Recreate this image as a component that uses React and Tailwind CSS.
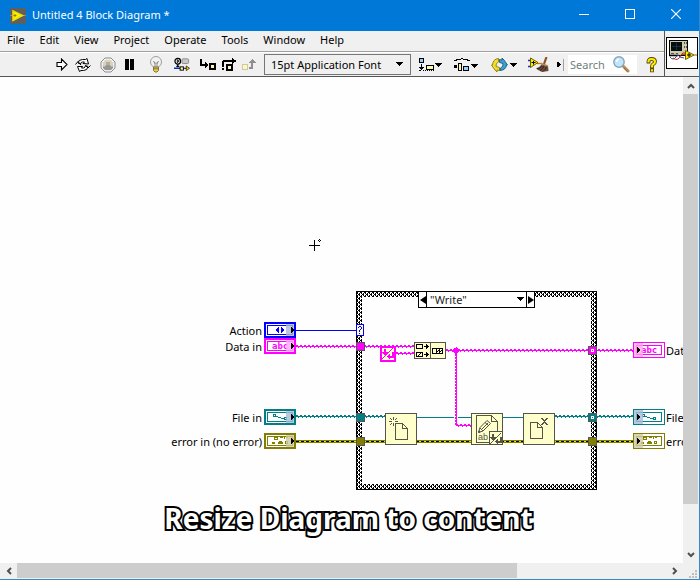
import React from "react";

const MENUS = ["File", "Edit", "View", "Project", "Operate", "Tools", "Window", "Help"];

const PINK = "#ff00ff";
const TEAL = "#007f86";
const OLIVE = "#827f00";
const CREAM = "#ffffcc";
const EDGE = "#545448";

/* ---------- title bar ---------- */

function AppIcon() {
  return (
    <svg width="16" height="16" viewBox="0 0 16 16" aria-hidden="true">
      <rect width="16" height="16" fill="#5f5f5f" />
      <path d="M0 7.500h3M13 7.500h3" stroke="#8a8a8a" />
      <path d="M3 3L12.500 7.500L3 12.500Z" fill="#fff200" stroke="#f0e000" strokeWidth="1.500" />
      <path d="M3.500 7.500h3M5 6v3" stroke="#8a7b00" />
    </svg>
  );
}

function TitleBar() {
  return (
    <header className="flex h-[31px] shrink-0 items-center bg-[#0078d7] pl-[10px] text-white">
      <AppIcon />
      <h1 className="ml-[6px] flex-1 pb-px text-[11px] leading-4">Untitled 4 Block Diagram *</h1>
      <button aria-label="Minimize" className="flex h-full w-[46px] items-center justify-center pb-1">
        <svg width="10" height="10" viewBox="0 0 10 10" shapeRendering="crispEdges">
          <path d="M0 5.500H10" stroke="#fff" />
        </svg>
      </button>
      <button aria-label="Maximize" className="flex h-full w-[45px] items-center justify-center pb-[3px]">
        <svg width="10" height="10" viewBox="0 0 10 10" shapeRendering="crispEdges">
          <rect x="0.500" y="0.500" width="9" height="9" fill="none" stroke="#fff" />
        </svg>
      </button>
      <button aria-label="Close" className="flex h-full w-[47px] items-center justify-center pb-[3px]">
        <svg width="10" height="10" viewBox="0 0 10 10">
          <path d="M0 0L10 10M10 0L0 10" stroke="#fff" strokeWidth="1.100" />
        </svg>
      </button>
    </header>
  );
}

/* ---------- tool bar icons ---------- */

function Caret({ x, y }) {
  return <path d={`M${x} ${y}h7v1h-1v1h-1v1h-1v1h-1v-1h-1v-1h-1v-1h-1z`} fill="#000" />;
}

function RunIcon() {
  return (
    <svg width="12" height="13" viewBox="0 0 12 13">
      <path d="M1 4.500H5.500V1L11 6.500L5.500 12V8.500H1Z" fill="#fff" stroke="#000" strokeWidth="1.100" />
    </svg>
  );
}

function LoopIcon() {
  return (
    <svg width="16" height="14" viewBox="0 0 16 14">
      <path
        d="M3 5Q3.500 1.500 7.500 1.500H10.500L12 0.500L13.500 6L8 5.500L9.500 4H7.500Q6 4 5.500 6Z"
        fill="#fff"
        stroke="#000"
      />
      <path
        d="M13 8.500Q12.500 12.500 8.500 12.500H6L4.500 13.500L2.500 8.500L7.500 8.500L6.500 10H8.500Q10.500 9.500 10.500 7.500Z"
        fill="#fff"
        stroke="#000"
      />
      <path d="M0.500 6.500L3 3.500L6 7M10.500 7.500L13 10L15.500 7.500" fill="none" stroke="#000" />
    </svg>
  );
}

function AbortIcon() {
  return (
    <svg width="16" height="16" viewBox="0 0 16 16">
      <path d="M5 1H11L15 5V11L11 15H5L1 11V5Z" fill="#f4f4f4" stroke="#8c8c8c" />
      <path d="M5.500 2.800H10.500L13.200 5.500V10.500L10.500 13.200H5.500L2.800 10.500V5.500Z" fill="#d9d3bd" />
      <path d="M3 9.500H5L6 8H10L11 9.500H13V11L11 13H5L3 11Z" fill="#969696" />
      <path d="M6 5H10V8H6Z" fill="#b9ae99" />
    </svg>
  );
}

function PauseIcon() {
  return (
    <svg width="10" height="11" viewBox="0 0 10 11" shapeRendering="crispEdges">
      <rect width="4" height="11" />
      <rect x="5" width="4" height="11" />
    </svg>
  );
}

function BulbIcon() {
  return (
    <svg width="12" height="17" viewBox="0 0 12 17">
      <circle cx="6" cy="6" r="5.500" fill="#f2f2f2" stroke="#9d9d9d" />
      <path d="M3.500 5L5 8V12M8.500 5L7 8V12M4 6L6 7.500L8 6" fill="none" stroke="#8c8c8c" />
      <path d="M3.500 11H8.500V14.500L7 16H5L3.500 14.500Z" fill="#e8cf45" stroke="#7d7340" />
      <path d="M3.500 12.800H8.500" stroke="#7d7340" />
    </svg>
  );
}

function RetainIcon() {
  return (
    <svg width="17" height="15" viewBox="0 0 17 15">
      <circle cx="4" cy="4" r="3" fill="#fff" stroke="#000" strokeWidth="1.300" />
      <path d="M3.500 2.500V5.500L5.500 4L3.500 2.500" fill="none" stroke="#000" />
      <rect x="8.500" y="1.500" width="7" height="5" rx="1" fill="#c8c8c8" stroke="#8a8a8a" />
      <path d="M4 7V10.500M2.500 9.500H5.500" stroke="#000" strokeWidth="1.300" />
      <path d="M0 11.500H8M13 11.500H15" stroke="#0034c8" strokeWidth="1.500" />
      <rect x="6.500" y="10" width="3.500" height="3.500" fill="#fff6b0" stroke="#000" />
      <path d="M10 11.500H13" stroke="#000" />
      <path d="M13 9V14L16.500 11.500Z" fill="#f3d600" stroke="#000" strokeWidth="0.700" />
    </svg>
  );
}

function StepIntoIcon() {
  return (
    <svg width="16" height="13" viewBox="0 0 16 13" shapeRendering="crispEdges">
      <path d="M0 1H2V6H5V4H6V5H7V6H8V8H7V9H6V10H5V8H0Z" />
      <rect x="10" y="6" width="5" height="5" fill="#fff6b0" stroke="#000" strokeWidth="2" />
    </svg>
  );
}

function StepOverIcon() {
  return (
    <svg width="16" height="13" viewBox="0 0 16 13" shapeRendering="crispEdges">
      <path d="M0 12V10H2V12ZM0 9V3H1V2H10V0H11V1H12V2H14V4H12V5H11V6H10V4H2V9Z" />
      <rect x="5" y="7" width="5" height="5" fill="#fff6b0" stroke="#000" strokeWidth="2" />
    </svg>
  );
}

function StepOutIcon() {
  return (
    <svg width="15" height="12" viewBox="0 0 15 12" shapeRendering="crispEdges">
      <rect x="0.500" y="5.500" width="5" height="5" fill="#fff6c4" stroke="#c9c4a0" />
      <path d="M7 8H10V4H8V3H9V2H10V1H11V0H12V1H13V2H14V3H15V4H12V10H7Z" fill="#8f8f8f" />
    </svg>
  );
}

function AlignIcon() {
  return (
    <svg width="23" height="14" viewBox="0 0 23 14" shapeRendering="crispEdges">
      <rect x="0.500" y="0.500" width="4" height="4" fill="#8fd0ff" stroke="#000" />
      <path d="M2 6H3V9H5V10H4V11H3V12H2V11H1V10H0V9H2Z" />
      <rect x="7.500" y="7.500" width="7" height="4" fill="#fff6b0" stroke="#000" />
      <path d="M0 12.500h2M4 12.500h1M6 12.500h1M8 12.500h1M10 12.500h1M12 12.500h1M14 12.500h1" stroke="#000" />
      <Caret x={16} y={5} />
    </svg>
  );
}

function DistributeIcon() {
  return (
    <svg width="24" height="14" viewBox="0 0 24 14" shapeRendering="crispEdges">
      <path d="M0 3V2H2V1H7V0H9V1H14V2H16V3H13V2H9V1H7V2H3V3Z" />
      <path d="M0 7H3V10H0Z" />
      <rect x="4.500" y="5.500" width="3" height="7" fill="#fff6b0" stroke="#000" />
      <rect x="9.500" y="8.500" width="5" height="4" fill="#8fd0ff" stroke="#000" />
      <Caret x={17} y={6} />
    </svg>
  );
}

function ReorderIcon() {
  return (
    <svg width="26" height="16" viewBox="0 0 26 16">
      <path
        d="M7.500 1.500Q2 2 1.500 8H0.500L4 13L6 15V13L8.500 13.500V10.500L5 9.500Q4.500 6 7.500 5Z"
        fill="#f5df2e"
        stroke="#8b7a00"
        strokeWidth="0.900"
      />
      <path
        d="M9 13.500Q15 13 15.500 8H16.500L13 3L11 1V3L8.500 2.500V5.500L12 6.500Q12.500 10 9.500 11Z"
        fill="#3c9fd4"
        stroke="#1a587c"
        strokeWidth="0.900"
      />
      <g shapeRendering="crispEdges">
        <Caret x={19} y={6} />
      </g>
    </svg>
  );
}

function CleanUpIcon() {
  return (
    <svg width="22" height="16" viewBox="0 0 22 16">
      <path d="M0 3.500H3M0 9.500H3" stroke="#1b2fd0" strokeWidth="1.300" />
      <path d="M9 6.500H14" stroke="#e06a00" strokeWidth="1.300" />
      <path d="M18.500 0L16 7" stroke="#8a5425" strokeWidth="2.200" />
      <path d="M14 7L20 9L20.500 14L14 15L10 13L8 11.500Q12 10 14 7Z" fill="#6e4b3a" />
      <path d="M9 11.500Q12 12 14 9M12 13.500Q15 12 16 9M15 14.500Q18 12 18.500 10" fill="none" stroke="#2f2320" />
      <path d="M13 6.500L20 9" stroke="#b58b60" strokeWidth="1.500" />
      <path d="M2.500 1L10 5.500L2.500 10.500Z" fill="#ffee00" stroke="#6b6000" />
      <path d="M3.500 5.500h4M5.500 4v3.500" stroke="#000" />
    </svg>
  );
}

function MagnifierIcon() {
  return (
    <svg width="17" height="17" viewBox="0 0 17 17" aria-hidden="true">
      <path d="M9.500 9.500L15 15" stroke="#c08a4c" strokeWidth="3" strokeLinecap="round" />
      <path d="M11 12L14.500 15.800" stroke="#7b6a5d" strokeWidth="1" />
      <circle cx="6" cy="6" r="5.200" fill="#bfe6fb" stroke="#86a5ba" strokeWidth="1.400" />
      <path d="M3.500 6Q3.500 3.500 6 3.300" fill="none" stroke="#fff" strokeWidth="1.400" />
    </svg>
  );
}

function HelpIcon() {
  return (
    <svg width="12" height="16" viewBox="0 0 12 16">
      <g fill="none" strokeLinecap="square">
        <path d="M2.500 4.500Q2.500 2 5.500 2Q9 2 9 4.700Q9 6.300 6.800 7.500Q6 8 6 9.500M6 13.300V13.400" stroke="#4d4600" strokeWidth="3.800" />
        <path d="M2.500 4.500Q2.500 2 5.500 2Q9 2 9 4.700Q9 6.300 6.800 7.500Q6 8 6 9.500M6 13.300V13.400" stroke="#ffea00" strokeWidth="2.100" />
      </g>
    </svg>
  );
}

function ViIcon() {
  return (
    <svg width="32" height="32" viewBox="0 0 32 32">
      <rect x="0.500" y="0.500" width="31" height="31" fill="#fff" stroke="#000" />
      <rect x="3.500" y="3.500" width="18" height="15" fill="#cfc9a4" stroke="#000" />
      <rect x="5" y="5" width="11" height="9" fill="#060d12" />
      <path d="M6 9.500H15M10.500 6V13" stroke="#24413f" strokeWidth="0.700" />
      <path d="M18.500 5V7M18.500 9V11M20.500 5V7M20.500 9V11M5 16.500H8M10 16.500H12" stroke="#555" />
      <path d="M3 18.500H12" stroke="#000" strokeWidth="1.500" />
      <path d="M4 20Q7 24 10 20Q12 16 14 20L18 21" fill="none" stroke="#24479a" />
      <path d="M7 21Q12 25 15 18Q17 15 19 16" fill="none" stroke="#c02222" />
      <path d="M15 17.500H19" stroke="#d04a00" />
      <path d="M19.500 13.500L28 18L19.500 22.500Z" fill="#ffea00" stroke="#6b6000" />
      <path d="M28 18H31" stroke="#d04a00" />
      <path d="M21 18h4M23 16v4" stroke="#000" />
    </svg>
  );
}

function Tool({ label, className, children }) {
  return (
    <button aria-label={label} className={`flex shrink-0 items-center ${className}`}>
      {children}
    </button>
  );
}

function ToolBar() {
  return (
    <div role="toolbar" className="flex h-6 items-center border-t border-white pl-14">
      <Tool label="Run" className="w-3"><RunIcon /></Tool>
      <Tool label="Run continuously" className="ml-[7px] w-4"><LoopIcon /></Tool>
      <Tool label="Abort execution" className="ml-[9px] w-4"><AbortIcon /></Tool>
      <Tool label="Pause" className="ml-[9px] w-[10px]"><PauseIcon /></Tool>
      <Tool label="Highlight execution" className="ml-[15px] w-3"><BulbIcon /></Tool>
      <Tool label="Retain wire values" className="ml-3 w-4"><RetainIcon /></Tool>
      <Tool label="Step into" className="ml-[10px] w-4"><StepIntoIcon /></Tool>
      <Tool label="Step over" className="ml-[6px] w-4"><StepOverIcon /></Tool>
      <Tool label="Step out" className="ml-1 w-[14px]"><StepOutIcon /></Tool>
      <div className="relative ml-2 w-[147px] shrink-0">
        <select
          aria-label="Text settings"
          className="block h-[21px] w-full appearance-none border border-[#767676] bg-[#f0f0f0] pl-[6px] text-[11px] leading-4 text-black"
        >
          <option>15pt Application Font</option>
        </select>
        <svg
          className="pointer-events-none absolute top-2 right-2"
          width="7"
          height="4"
          viewBox="0 0 7 4"
          shapeRendering="crispEdges"
        >
          <Caret x={0} y={0} />
        </svg>
      </div>
      <Tool label="Align objects" className="ml-2 w-[23px]"><AlignIcon /></Tool>
      <Tool label="Distribute objects" className="ml-3 w-6"><DistributeIcon /></Tool>
      <Tool label="Reorder" className="ml-[13px] w-[26px]"><ReorderIcon /></Tool>
      <Tool label="Clean up diagram" className="ml-[11px] w-[22px]"><CleanUpIcon /></Tool>
      <Tool label="More" className="ml-[7px] w-1">
        <svg width="4" height="5" viewBox="0 0 4 5" shapeRendering="crispEdges">
          <path d="M0 0H2V1H3V2H4V3H3V4H2V5H0Z" />
        </svg>
      </Tool>
      <div className="ml-[2px] h-3 w-px bg-[#a0a0a0]" />
      <div className="ml-1 flex h-[19px] w-[69px] shrink-0 items-center bg-white pl-[2px]">
        <input
          aria-label="Search"
          placeholder="Search"
          className="w-[43px] bg-transparent text-[11px] leading-4 outline-none placeholder:text-[#6f7f7a]"
        />
        <MagnifierIcon />
      </div>
      <Tool label="Show context help" className="ml-[9px] w-3"><HelpIcon /></Tool>
    </div>
  );
}

/* ---------- diagram ---------- */

/* Braided wire: a solid core with alternating ticks above and below it. */
function Braid({ x1, x2, y, color }) {
  return (
    <g stroke={color}>
      <path d={`M${x1} ${y - 0.5}H${x2}`} strokeDasharray="2 2" />
      <path d={`M${x1} ${y + 0.5}H${x2}`} />
      <path d={`M${x1} ${y + 1.5}H${x2}`} strokeDasharray="1 3" strokeDashoffset="-2" />
    </g>
  );
}

function ErrorWire({ x1, x2, y }) {
  return (
    <g>
      <path d={`M${x1} ${y + 0.5}H${x2}`} stroke={OLIVE} strokeWidth="3" />
      <path d={`M${x1} ${y + 0.5}H${x2}`} stroke="#f0e800" />
      <path d={`M${x1} ${y + 0.5}H${x2}`} stroke="#000" strokeDasharray="3 2" />
    </g>
  );
}

function Tunnel({ x, y, color, hollow }) {
  return (
    <g>
      <rect x={x + 0.5} y={y + 0.5} width="8" height="8" fill={color} stroke="#555" />
      {hollow && <rect x={x + 3.5} y={y + 3.5} width="2" height="2" fill={color} stroke="#fff" />}
    </g>
  );
}

function Glyph({ kind, color }) {
  if (kind === "enum")
    return <path d="M15 5V11H14V10H13V9H12V7H13V6H14V5ZM17 5V11H18V10H19V9H20V7H19V6H18V5Z" fill={color} />;
  if (kind === "string")
    return (
      <text x="8" y="11" fill={color} fontSize="9" fontWeight="700" fontFamily="'DejaVu Sans Mono', monospace">
        abc
      </text>
    );
  if (kind === "refnum")
    return (
      <g fill="none" stroke={color}>
        <rect x="9.500" y="5.500" width="2" height="2" />
        <path d="M12 7.500H14M14 8.500H17M17 9.500H20" />
        <rect x="20.500" y="8.500" width="2" height="2" />
      </g>
    );
  return (
    <g fill="none" stroke={color}>
      <rect x="10.500" y="4.500" width="3" height="2" />
      <path d="M16 4.500H19M20.500 4V6M22 4.500H24M8 9.500H11M8 10.500H11M14 9.500H19M14 10.500H19M15 8.500H18" />
      <rect x="21.500" y="8.500" width="2" height="2" />
    </g>
  );
}

function Terminal({ x, y, color, tint, kind, output }) {
  return (
    <g transform={`translate(${x} ${y})`}>
      {output ? (
        <>
          <rect x="0.500" y="0.500" width="31" height="15" fill="#fff" stroke={color} />
          <rect x="3.500" y="3.500" width="25" height="9" fill="#fff" stroke={color} />
          <Glyph kind={kind} color={color} />
          <rect x="1" y="1" width="9" height="14" fill={tint} opacity="0.800" />
          <path d="M4 5H5V6H6V7H7V9H6V10H5V11H4Z" />
        </>
      ) : (
        <>
          <rect x="1" y="1" width="30" height="14" fill="#fff" stroke={color} strokeWidth="2" />
          <rect x="3.500" y="3.500" width="25" height="9" fill="#fff" stroke={color} />
          <Glyph kind={kind} color={color} />
          <rect x="22" y="2" width="8" height="12" fill={tint} opacity="0.800" />
          <path d="M27 5H28V6H29V7H30V9H29V10H28V11H27Z" />
        </>
      )}
    </g>
  );
}

function NodeBox({ x, y, children }) {
  return (
    <g transform={`translate(${x} ${y})`}>
      <rect x="0.500" y="0.500" width="31" height="31" fill={CREAM} stroke={EDGE} />
      {children}
    </g>
  );
}

function LineEndGlyph({ color }) {
  return (
    <g fill={color}>
      <path d="M2 1H4V4H6V5H5V6H4V7H2V6H1V5H0V4H2Z" />
      <path d="M10 4H12V10H8V11H7V10H6V9H5V8H6V7H7V6H8V8H10Z" />
      <path d="M1 9h1v1h-1zM2 8h1v1h-1zM3 7h1v1h-1zM4 6h1v1h-1zM5 5h1v1h-1zM6 4h1v1h-1zM7 3h1v1h-1zM8 2h1v1h-1zM9 1h1v1h-1zM10 0h1v1h-1zM0 10h1v1h-1z" />
    </g>
  );
}

function Wiring() {
  return (
    <svg
      className="absolute top-0 left-0"
      width="683"
      height="486"
      viewBox="0 77 683 486"
      shapeRendering="crispEdges"
      fill="#000"
    >
      <defs>
        <pattern id="weave" width="4" height="4" patternUnits="userSpaceOnUse">
          <rect width="4" height="4" fill="#fff" />
          <path d="M0 0H2V1H0ZM1 1H2V2H1ZM3 1H4V2H3ZM2 2H4V3H2ZM1 3H2V4H1ZM3 3H4V4H3Z" />
        </pattern>
      </defs>

      {/* tool cursor */}
      <path d="M309 245.500H320M314.500 240V251" stroke="#000" />
      <path d="M319 239h1v1h-1zM318 240h1v1h-1zM320 240h1v1h-1zM319 241h1v1h-1z" />

      {/* case structure frame */}
      <path d="M356 291H597V490H356Z" />
      <path d="M357 292H596V489H357Z" fill="url(#weave)" />
      <path d="M362 297H591V484H362Z" fill="#fefefe" />

      {/* wires */}
      <path d="M296 330.500H357" stroke="#0000ff" />
      <Braid x1={296} x2={414} y={346} color={PINK} />
      <Braid x1={396} x2={414} y={353} color={PINK} />
      <Braid x1={446} x2={633} y={350} color={PINK} />
      <path d="M456.500 351V426" stroke={PINK} />
      <path d="M455.500 351V426" stroke={PINK} strokeDasharray="2 1" />
      <Braid x1={456} x2={471} y={425} color={PINK} />
      <path d="M456 347H457V348H458V349H459V352H458V353H457V354H455V353H454V352H453V349H454V348H456Z" fill={PINK} />
      <Braid x1={296} x2={385} y={416} color={TEAL} />
      <path d="M417 417.500H454M458 417.500H523" stroke={TEAL} />
      <Braid x1={555} x2={633} y={416} color={TEAL} />
      <ErrorWire x1={296} x2={633} y={441} />

      {/* case selector terminal */}
      <rect x="356.500" y="324.500" width="7" height="11" fill={CREAM} stroke="#0000ff" />
      <path
        d="M358 327h1v1h-1zM359 326h2v1h-2zM361 327h1v2h-1zM360 329h1v1h-1zM359 330h1v2h-1zM359 333h1v1h-1z"
        fill="#0000ff"
      />

      {/* tunnels */}
      <Tunnel x={356} y={342} color={PINK} />
      <Tunnel x={356} y={413} color={TEAL} />
      <Tunnel x={356} y={437} color={OLIVE} />
      <Tunnel x={588} y={346} color={PINK} hollow />
      <Tunnel x={588} y={413} color={TEAL} hollow />
      <Tunnel x={588} y={437} color={OLIVE} />

      {/* end of line constant */}
      <g transform="translate(380 346)">
        <rect x="1" y="1" width="14" height="14" fill={CREAM} stroke={PINK} strokeWidth="2" />
        <g transform="translate(2 2)">
          <LineEndGlyph color={PINK} />
        </g>
      </g>

      {/* concatenate strings */}
      <g transform="translate(414 342)">
        <rect x="0.500" y="0.500" width="31" height="16" fill={CREAM} stroke={EDGE} />
        <path d="M16.500 1V16" stroke={EDGE} />
        <g fill="none" stroke="#000">
          <rect x="2.500" y="2.500" width="6" height="4" />
          <rect x="2.500" y="10.500" width="6" height="4" />
          <rect x="18.500" y="6.500" width="10" height="5" />
          <path d="M10 4.500H15M10 12.500H15M22.500 7V11M25.500 7V11M4 13.500H5M5 12.500H6M6 11.500H7M23 9.500H24M24 8.500H25M27 8.500H28M26 9.500H27" />
        </g>
        <path d="M12 2H13V3H14V6H13V7H12ZM12 10H13V11H14V14H13V15H12Z" />
      </g>

      {/* open file */}
      <NodeBox x={385} y={413}>
        <path d="M10.500 10.500H17.500L22.500 15.500V26.500H10.500ZM17.500 10.500V15.500H22.500" fill="none" stroke={EDGE} />
        <path
          d="M8 4h1v3h-1zM8 10h1v3h-1zM4 8h3v1h-3zM10 8h3v1h-3zM5 5h1v1h-1zM6 6h1v1h-1zM11 5h1v1h-1zM10 6h1v1h-1zM6 10h1v1h-1zM5 11h1v1h-1z"
          fill={EDGE}
        />
      </NodeBox>

      {/* write text file */}
      <NodeBox x={471} y={413}>
        <path d="M5.500 2.500H20.500L26.500 8.500V29.500H5.500ZM20.500 2.500V8.500H26.500" fill="none" stroke={EDGE} />
        <g shapeRendering="auto" fill="none" stroke={EDGE}>
          <path d="M7.500 19.500L9 14.500L16 7.500L19.500 10.500L12 18Z" />
          <path d="M9 15L12 18M14 9.500L17.500 12.500M11 16L17 10" />
          <path d="M7.500 19.500L9 18" strokeWidth="2" />
        </g>
        <text x="7" y="27" fill={EDGE} fontSize="9" fontFamily="'Liberation Sans', sans-serif">
          ab
        </text>
        <rect x="18.500" y="18.500" width="13" height="13" fill={CREAM} stroke={EDGE} />
        <g transform="translate(19 20)">
          <LineEndGlyph color={EDGE} />
        </g>
      </NodeBox>

      {/* close file */}
      <NodeBox x={523} y={413}>
        <path d="M7.500 9.500H14.500L19.500 14.500V25.500H7.500ZM14.500 9.500V14.500H19.500" fill="none" stroke={EDGE} />
        <path d="M18 5H20V6H21V7H22V6H23V5H25V6H24V7H23V8H22V9H23V10H24V11H25V12H23V11H22V10H21V11H20V12H18V11H19V10H20V9H21V8H20V7H19V6H18Z" fill={EDGE} />
      </NodeBox>

      {/* terminals */}
      <Terminal x={264} y={322} color="#0000ff" tint="#a9b8dc" kind="enum" />
      <Terminal x={264} y={338} color={PINK} tint="#ffa6ff" kind="string" />
      <Terminal x={264} y={409} color={TEAL} tint="#a6bcd8" kind="refnum" />
      <Terminal x={264} y={433} color={OLIVE} tint="#cfc9a0" kind="cluster" />
      <Terminal x={633} y={342} color={PINK} tint="#ffa6e8" kind="string" output />
      <Terminal x={633} y={409} color={TEAL} tint="#a6bcd8" kind="refnum" output />
      <Terminal x={633} y={433} color={OLIVE} tint="#cfc9a0" kind="cluster" output />
    </svg>
  );
}

function CaseSelector() {
  return (
    <div className="absolute top-[214px] left-[418px] flex h-[17px] w-[117px] border border-black bg-white">
      <button aria-label="Previous case" className="flex w-2 items-center justify-center border-r border-black">
        <svg width="6" height="8" viewBox="0 0 6 8"><path d="M6 0V8L0 4Z" /></svg>
      </button>
      <select
        aria-label="Case"
        className="h-full min-w-0 flex-1 appearance-none bg-transparent pl-[3px] text-[11px] leading-[15px] text-[#222]"
      >
        <option>"Write"</option>
      </select>
      <svg className="pointer-events-none mt-[5px] mr-[2px]" width="7" height="4" viewBox="0 0 7 4" shapeRendering="crispEdges">
        <Caret x={0} y={0} />
      </svg>
      <button aria-label="Next case" className="flex w-2 items-center justify-center border-l border-black">
        <svg width="6" height="8" viewBox="0 0 6 8"><path d="M0 0V8L6 4Z" /></svg>
      </button>
    </div>
  );
}

function Canvas() {
  const inputLabel = "absolute left-[142px] w-[120px] text-right text-[11px] leading-4 whitespace-nowrap text-black";
  const outputLabel = "absolute left-[666px] text-[11px] leading-4 whitespace-nowrap text-black";
  return (
    <main className="relative min-w-0 flex-1 overflow-hidden bg-[#fefefe]">
      <Wiring />
      <CaseSelector />
      <span className={`${inputLabel} top-[246px]`}>Action</span>
      <span className={`${inputLabel} top-[262px]`}>Data in</span>
      <span className={`${inputLabel} top-[333px]`}>File in</span>
      <span className={`${inputLabel} top-[357px]`}>error in (no error)</span>
      <span className={`${outputLabel} top-[266px]`}>Data</span>
      <span className={`${outputLabel} top-[333px]`}>File</span>
      <span className={`${outputLabel} top-[357px]`}>error</span>
    </main>
  );
}

/* ---------- scroll bars ---------- */

function ScrollArrow({ label, d, className }) {
  return (
    <button aria-label={label} className={`flex shrink-0 items-center justify-center ${className}`}>
      <svg width="8" height="8" viewBox="0 0 8 8">
        <path d={d} fill="none" stroke="#505050" strokeWidth="2" />
      </svg>
    </button>
  );
}

function VerticalScroll() {
  return (
    <div className="flex w-4 shrink-0 flex-col bg-[#f0f0f0]">
      <ScrollArrow label="Scroll up" d="M1 6L4 3L7 6" className="h-[17px] w-[15px]" />
      <div className="w-[15px] flex-[410] bg-[#cdcdcd]" />
      <div className="flex-[42]" />
      <ScrollArrow label="Scroll down" d="M1 2L4 5L7 2" className="h-[17px] w-[15px]" />
    </div>
  );
}

function HorizontalScroll() {
  return (
    <div className="flex h-4 shrink-0 bg-[#f0f0f0]">
      <ScrollArrow label="Scroll left" d="M6 1L3 4L6 7" className="h-[15px] w-[17px]" />
      <div className="h-[15px] flex-[500] bg-[#cdcdcd]" />
      <div className="flex-[149]" />
      <ScrollArrow label="Scroll right" d="M2 1L5 4L2 7" className="h-[15px] w-[17px]" />
      <svg className="shrink-0" width="16" height="16" viewBox="0 0 16 16" shapeRendering="crispEdges">
        <path d="M12 7h2v2h-2zM9 10h2v2h-2zM12 10h2v2h-2zM6 13h2v2h-2zM9 13h2v2h-2zM12 13h2v2h-2z" fill="#bfbfbf" />
      </svg>
    </div>
  );
}

export default function App() {
  return (
    <div className="relative flex h-screen flex-col overflow-hidden border-r border-b border-[#3b86c4] bg-[#f0f0f0] font-['Noto_Sans','Open_Sans',sans-serif] text-black">
      <TitleBar />
      <div className="flex shrink-0 border-b border-[#555]">
        <div className="min-w-0 flex-1">
          <nav className="flex h-[21px] items-center gap-px border-b border-[#a0a0a0]">
            {MENUS.map((name) => (
              <button key={name} className="px-[7px] pb-[2px] text-[11px] leading-4">
                {name}
              </button>
            ))}
          </nav>
          <ToolBar />
        </div>
        <div className="flex w-[35px] shrink-0 justify-center border-l border-[#555] pt-[6px]">
          <ViIcon />
        </div>
      </div>
      <div className="flex min-h-0 flex-1">
        <Canvas />
        <VerticalScroll />
      </div>
      <HorizontalScroll />
      <p className="pointer-events-none absolute inset-x-0 bottom-[41px] pr-[2px] text-center font-['Noto_Sans','Open_Sans',sans-serif] text-[28px] leading-10 font-bold text-white [-webkit-text-stroke:4px_#000] [paint-order:stroke_fill] [stroke-linejoin:round]">
        Resize Diagram to content
      </p>
    </div>
  );
}
